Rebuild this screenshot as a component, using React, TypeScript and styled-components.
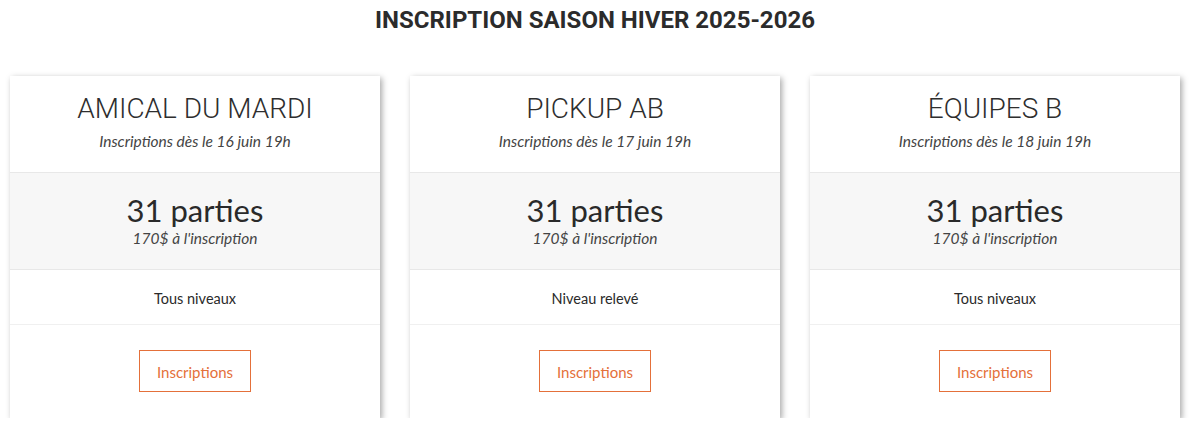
import React from "react";
import styled, { createGlobalStyle } from "styled-components";

const Global = createGlobalStyle`
  html, body { margin: 0; padding: 0; background: #fff; }
  body { font-family: "Lato", "Open Sans", sans-serif; color: #333; }
`;

const Page = styled.div`
  width: 1190px;
  padding-top: 5px;
`;

const Heading = styled.h1`
  margin: 0;
  text-align: center;
  font-family: "Roboto", sans-serif;
  font-weight: 700;
  font-size: 24px;
  line-height: 30px;
  color: #2b2b2b;
`;

const Grid = styled.div`
  display: grid;
  grid-template-columns: repeat(3, 370px);
  column-gap: 30px;
  padding: 41px 0 0 10px;
`;

const Card = styled.div`
  background: #fff;
  box-shadow: 2px 2px 6px rgba(0, 0, 0, 0.35);
  display: flex;
  flex-direction: column;
  text-align: center;
  height: 342px;
`;

const Head = styled.div`
  height: 97px;
  border-bottom: 1px solid #e8e8e8;
  box-sizing: border-box;
  padding-top: 18px;
`;

const Name = styled.div`
  font-family: "Roboto", sans-serif;
  font-weight: 300;
  font-size: 28px;
  line-height: 30px;
  color: #2e2e2e;
`;

const Sub = styled.div`
  font-style: italic;
  font-size: 15.5px;
  line-height: 18px;
  margin-top: 8px;
  color: #444;
`;

const Price = styled.div`
  background: #f7f7f7;
  height: 97px;
  border-bottom: 1px solid #e8e8e8;
  box-sizing: border-box;
  padding-top: 20px;
`;

const Count = styled.div`
  font-size: 31px;
  line-height: 34px;
  color: #2a2a2a;
`;

const Fee = styled.div`
  font-style: italic;
  font-size: 15.5px;
  line-height: 18px;
  margin-top: 2px;
  color: #444;
`;

const Level = styled.div`
  height: 55px;
  border-bottom: 1px solid #f0f0f0;
  box-sizing: border-box;
  display: flex;
  align-items: center;
  justify-content: center;
  padding-top: 2px;
  font-size: 14.5px;
  color: #2a2a2a;
`;

const Foot = styled.div`
  flex: 1;
  display: flex;
  justify-content: center;
  padding-top: 25px;
`;

const Button = styled.a`
  width: 112px;
  height: 42px;
  box-sizing: border-box;
  border: 1px solid #e4703a;
  color: #e4703a;
  font-size: 15px;
  display: flex;
  align-items: center;
  justify-content: center;
  padding-top: 2px;
  text-decoration: none;
`;

const data = [
  { name: "AMICAL DU MARDI", date: "16 juin 19h", level: "Tous niveaux" },
  { name: "PICKUP AB", date: "17 juin 19h", level: "Niveau relevé" },
  { name: "ÉQUIPES B", date: "18 juin 19h", level: "Tous niveaux" },
];

export default function App() {
  return (
    <Page>
      <Global />
      <Heading>INSCRIPTION SAISON HIVER 2025-2026</Heading>
      <Grid>
        {data.map((d) => (
          <Card key={d.name}>
            <Head>
              <Name>{d.name}</Name>
              <Sub>Inscriptions dès le {d.date}</Sub>
            </Head>
            <Price>
              <Count>31 parties</Count>
              <Fee>170$ à l'inscription</Fee>
            </Price>
            <Level>{d.level}</Level>
            <Foot>
              <Button href="#">Inscriptions</Button>
            </Foot>
          </Card>
        ))}
      </Grid>
    </Page>
  );
}
